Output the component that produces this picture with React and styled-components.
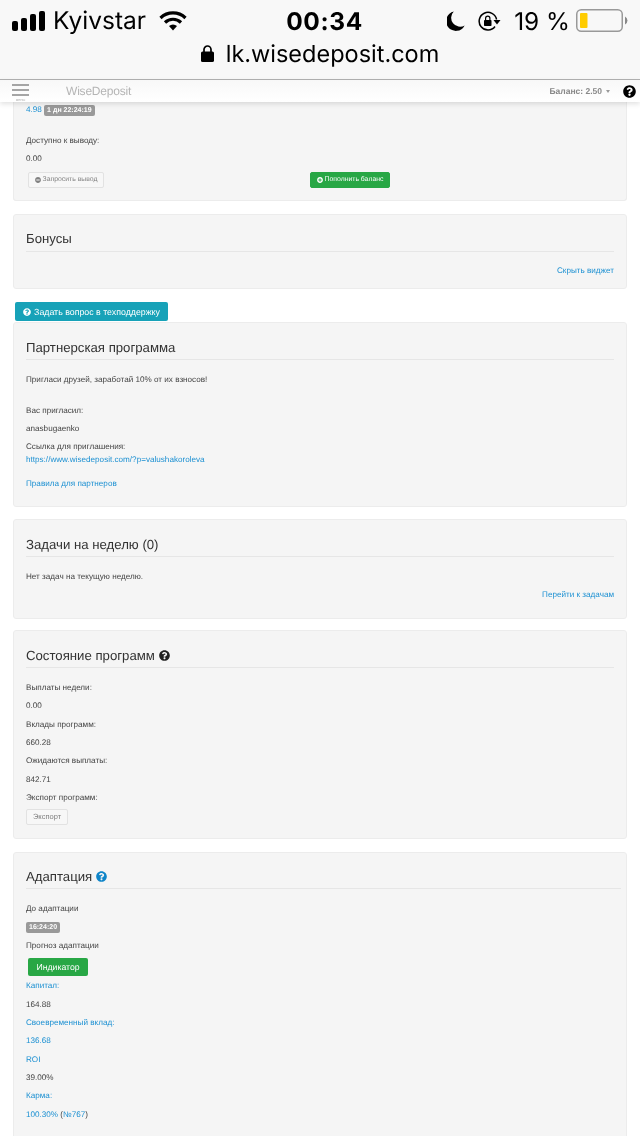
import React from 'react';
import styled, { createGlobalStyle } from 'styled-components';
import { FaQuestionCircle, FaMinusCircle, FaPlusCircle } from 'react-icons/fa';

const GlobalStyle = createGlobalStyle`
  html, body {
    margin: 0;
    padding: 0;
    background: #fff;
    font-family: "Liberation Sans", Arial, sans-serif;
    text-rendering: geometricPrecision;
  }
`;

const Screen = styled.div`
  width: 640px;
  height: 1136px;
  overflow: hidden;
  background: #fff;
  color: #333;
`;

const Chrome = styled.div`
  height: 79px;
  background: #f8f8f8;
  border-bottom: 1px solid #b2b2b2;
  color: #000;
  filter: blur(0.25px);
`;

const StatusBar = styled.div`
  height: 41px;
  padding: 0 12px;
  display: grid;
  grid-template-columns: 1fr auto 1fr;
  align-items: center;
`;

const StatusSide = styled.div`
  display: flex;
  align-items: center;
  justify-content: ${p => (p.$end ? 'flex-end' : 'flex-start')};
  gap: ${p => (p.$end ? '10px' : '8px')};
`;

const Carrier = styled.span`
  font-family: Inter, sans-serif;
  font-size: 24.5px;
  line-height: 1;
  margin-right: 5px;
`;

const Clock = styled.span`
  font-family: Inter, sans-serif;
  font-size: 24.5px;
  font-weight: 700;
  letter-spacing: 0.6px;
  margin-left: 9px;
`;

const Percent = styled.span`
  font-family: Inter, sans-serif;
  font-size: 24.4px;
  margin-left: 3px;
  margin-right: -4px;
`;

const UrlRow = styled.div`
  display: flex;
  justify-content: center;
  align-items: center;
  gap: 12px;
  height: 24px;
  font-family: Inter, sans-serif;
  font-size: 23.5px;
`;

const Navbar = styled.div`
  height: 22px;
  display: flex;
  align-items: center;
  background: linear-gradient(#f8f8f8, #ffffff);
  box-shadow: 0 2px 5px rgba(0, 0, 0, 0.12);
  position: relative;
  z-index: 2;
  padding: 0 4px 0 12px;
  filter: blur(0.3px);
`;

const Burger = styled.div`
  width: 17px;
  display: flex;
  flex-direction: column;
  gap: 2.5px;
  margin: 3px 37px 0 0;
`;

const BurgerLine = styled.span`
  height: 2.5px;
  background: #a5a5a5;
`;

const BurgerLabel = styled.span`
  font-size: 3px;
  line-height: 3px;
  color: #aaa;
  text-align: center;
`;

const Brand = styled.span`
  font-size: 12px;
  color: #b5b5b5;
  flex: 1;
  letter-spacing: -0.2px;
`;

const Balance = styled.span`
  font-size: 8.5px;
  font-weight: 700;
  color: #888;
  margin-right: 13px;
`;

const Caret = styled.span`
  display: inline-block;
  margin-left: 4px;
  border: 2.5px solid transparent;
  border-top: 3px solid #999;
  border-bottom: 0;
  vertical-align: 1px;
`;

const Content = styled.div`
  padding: 0 13px;
  filter: blur(0.3px);
`;

const Well = styled.section`
  box-sizing: border-box;
  height: ${p => p.$height}px;
  margin-top: ${p => p.$top ?? 12}px;
  background: #f5f5f5;
  border: 1px solid #ececec;
  border-top-width: ${p => (p.$cut ? 0 : 1)}px;
  border-radius: ${p => (p.$cut ? '0 0 3px 3px' : '3px')};
  padding: ${p => (p.$cut ? '2px' : '16px')} 12px 0;
`;

const Heading = styled.h3`
  margin: 0 0 14.5px;
  padding-top: ${p => (p.$low ? 1 : 0)}px;
  padding-bottom: ${p => (p.$low ? 3.5 : p.$tight ? 3.5 : 4.5)}px;
  font-size: 13.2px;
  line-height: 15px;
  font-weight: 400;
  color: #333;
  border-bottom: 1px solid #e6e6e6;
  display: flex;
  align-items: center;
  gap: 4px;
  width: ${p => (p.$wide ? '595px' : 'auto')};
`;

const Line = styled.p`
  margin: ${p => p.$up ?? 0}px 0 ${p => p.$gap ?? 7.35}px;
  font-size: 8.15px;
  line-height: 11px;
  color: ${p => (p.$link ? '#1c90d2' : '#444')};
  text-align: ${p => (p.$right ? 'right' : 'left')};
`;

const Link = styled.span`
  color: #1c90d2;
`;

const Badge = styled.span`
  display: inline-block;
  background: #999;
  color: #fff;
  font-size: 7px;
  font-weight: 700;
  line-height: 11px;
  padding: 0 3px;
  border-radius: 2px;
`;

const ButtonRow = styled.div`
  display: flex;
  padding-left: 2px;
`;

const Button = styled.div`
  box-sizing: border-box;
  display: inline-flex;
  align-items: center;
  justify-content: center;
  gap: 2px;
  height: 16px;
  width: ${p => p.$width}px;
  margin-left: ${p => p.$left ?? 0}px;
  font-size: ${p => p.$size ?? 6.85}px;
  border-radius: 2px;
  color: ${p => (p.$green ? '#fff' : '#808080')};
  background: ${p => (p.$green ? '#28a745' : '#f7f7f7')};
  border: 1px solid ${p => (p.$green ? '#28a745' : '#e2e2e2')};
`;

const SupportButton = styled.div`
  box-sizing: border-box;
  width: 153px;
  height: 19px;
  margin: 13px 0 1px 2px;
  display: flex;
  align-items: center;
  justify-content: center;
  gap: 3px;
  font-size: 8.8px;
  color: #fff;
  background: #17a2b8;
  border-radius: 2px;
`;

const IndicatorButton = styled.div`
  box-sizing: border-box;
  width: 60px;
  height: 18px;
  margin: 0 0 4px 2px;
  display: flex;
  align-items: center;
  justify-content: center;
  font-size: 8.7px;
  color: #fff;
  background: #28a745;
  border-radius: 2px;
`;

const HelpNav = styled(FaQuestionCircle)`
  font-size: 13px;
  color: #000;
`;

const MoonSvg = styled.svg`
  margin-right: 3px;
`;

function Signal() {
  return (
    <svg width="33" height="20" viewBox="0 0 33 20" fill="#000">
      <rect x="0" y="10" width="6" height="10" rx="2" />
      <rect x="9" y="7" width="6" height="13" rx="2" />
      <rect x="18" y="3" width="6" height="17" rx="2" />
      <rect x="27" y="0" width="6" height="20" rx="2" />
    </svg>
  );
}

function Wifi() {
  return (
    <svg width="28" height="20" viewBox="0 0 28 20" fill="none" stroke="#000" strokeWidth="3.2">
      <path d="M1.5 7 A18 18 0 0 1 26.5 7" />
      <path d="M6 11.5 A11.5 11.5 0 0 1 22 11.5" />
      <path d="M10 15 L14 19.5 L18 15 A6 6 0 0 0 10 15 Z" fill="#000" stroke="none" />
    </svg>
  );
}

function LockIcon() {
  return (
    <svg width="13" height="17" viewBox="0 0 13 17" fill="none">
      <rect x="0" y="6.5" width="13" height="10.5" rx="1.6" fill="#000" />
      <path d="M3 7 V4.5 a3.5 3.5 0 0 1 7 0 V7" stroke="#000" strokeWidth="1.7" />
    </svg>
  );
}

function Moon() {
  return (
    <MoonSvg width="18" height="20" viewBox="0 0 16 18" fill="#000">
      <path d="M6 0.5 A8.8 8.8 0 1 0 15.8 13 A8 8 0 0 1 6 0.5 Z" />
    </MoonSvg>
  );
}

function RotationLock() {
  return (
    <svg width="23" height="20" viewBox="0 0 23 20" fill="none" stroke="#000">
      <path d="M17 15.5 A8.8 8.8 0 1 1 18.6 8.5" strokeWidth="1.5" />
      <path d="M15.5 9 L22.5 9 L19 13.5 Z" fill="#000" stroke="none" />
      <rect x="6" y="9" width="7.5" height="6" rx="0.8" fill="#000" stroke="none" />
      <path d="M7.6 9 V7.2 a2.15 2.15 0 0 1 4.3 0 V9" strokeWidth="1.2" />
    </svg>
  );
}

function BatteryIcon() {
  return (
    <svg width="52" height="23" viewBox="0 0 52 23">
      <rect x="0.75" y="0.75" width="45.5" height="21.5" rx="4.5" fill="none" stroke="#999" strokeWidth="1.5" />
      <rect x="4" y="4" width="7.5" height="15" rx="1" fill="#ffcc00" />
      <path d="M49 7.5 a4.5 4.5 0 0 1 0 8 Z" fill="#888" />
    </svg>
  );
}

export default function App() {
  return (
    <Screen>
      <GlobalStyle />
      <Chrome>
        <StatusBar>
          <StatusSide>
            <Signal />
            <Carrier>Kyivstar</Carrier>
            <Wifi />
          </StatusSide>
          <Clock>00:34</Clock>
          <StatusSide $end>
            <Moon />
            <RotationLock />
            <Percent>19 %</Percent>
            <BatteryIcon />
          </StatusSide>
        </StatusBar>
        <UrlRow>
          <LockIcon />
          <span>lk.wisedeposit.com</span>
        </UrlRow>
      </Chrome>
      <Navbar>
        <Burger>
          <BurgerLine />
          <BurgerLine />
          <BurgerLine />
          <BurgerLabel>МЕНЮ</BurgerLabel>
        </Burger>
        <Brand>WiseDeposit</Brand>
        <Balance>
          Баланс: 2.50<Caret />
        </Balance>
        <HelpNav />
      </Navbar>
      <Content>
        <Well $cut $height={99} $top={0}>
          <Line $gap={18.5}>
            <Link>4.98</Link> <Badge>1 дн 22:24:19</Badge>
          </Line>
          <Line>Доступно к выводу:</Line>
          <Line $gap={8}>0.00</Line>
          <ButtonRow>
            <Button $width={76}>
              <FaMinusCircle size={6} /> Запросить вывод
            </Button>
            <Button $green $width={80} $left={206}>
              <FaPlusCircle size={6} /> Пополнить баланс
            </Button>
          </ButtonRow>
        </Well>
        <Well $height={75} $top={13}>
          <Heading>Бонусы</Heading>
          <Line $right $link $up={-1}>Скрыть виджет</Line>
        </Well>
        <SupportButton>
          <FaQuestionCircle size={8} /> Задать вопрос в техподдержку
        </SupportButton>
        <Well $height={185} $top={0}>
          <Heading $low>Партнерская программа</Heading>
          <Line $gap={20}>Пригласи друзей, заработай 10% от их взносов!</Line>
          <Line>Вас пригласил:</Line>
          <Line $gap={6.5}>anasbugaenko</Line>
          <Line $gap={2}>Ссылка для приглашения:</Line>
          <Line $link $gap={13}>https://www.wisedeposit.com/?p=valushakoroleva</Line>
          <Line $link>Правила для партнеров</Line>
        </Well>
        <Well $height={100}>
          <Heading $low>Задачи на неделю (0)</Heading>
          <Line>Нет задач на текущую неделю.</Line>
          <Line $right $link>Перейти к задачам</Line>
        </Well>
        <Well $height={209} $top={11}>
          <Heading $low>
            Состояние программ <FaQuestionCircle size={11} color="#222" />
          </Heading>
          <Line>Выплаты недели:</Line>
          <Line>0.00</Line>
          <Line>Вклады программ:</Line>
          <Line>660.28</Line>
          <Line>Ожидаются выплаты:</Line>
          <Line>842.71</Line>
          <Line $gap={3}>Экспорт программ:</Line>
          <Button $width={42} $size={7.5}>Экспорт</Button>
        </Well>
        <Well $height={300} $top={13}>
          <Heading $wide $tight>
            Адаптация <FaQuestionCircle size={11} color="#0f85c9" />
          </Heading>
          <Line>До адаптации</Line>
          <Line $gap={6.5}>
            <Badge>16:24:20</Badge>
          </Line>
          <Line>Прогноз адаптации</Line>
          <IndicatorButton>Индикатор</IndicatorButton>
          <Line $link>Капитал:</Line>
          <Line>164.88</Line>
          <Line $link>Своевременный вклад:</Line>
          <Line $link>136.68</Line>
          <Line $link>ROI</Line>
          <Line>39.00%</Line>
          <Line $link>Карма:</Line>
          <Line>
            <Link>100.30%</Link> (<Link>№767</Link>)
          </Line>
        </Well>
      </Content>
    </Screen>
  );
}
